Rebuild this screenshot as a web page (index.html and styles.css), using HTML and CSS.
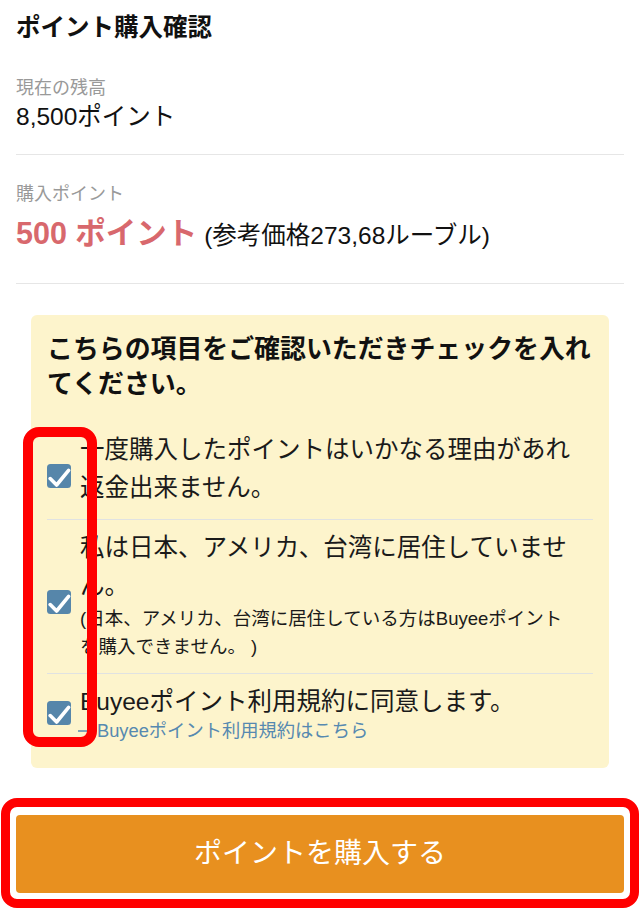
FILE: index.html
```html
<!DOCTYPE html>
<html lang="ja">
<head>
<meta charset="utf-8">
<title>ポイント購入確認</title>
<link rel="stylesheet" href="styles.css">
</head>
<body>
<div class="page">
  <h1 class="title">ポイント購入確認</h1>

  <section class="summary summary-first">
    <div class="label">現在の残高</div>
    <div class="balance">8,500ポイント</div>
  </section>

  <section class="summary summary-second">
    <div class="label">購入ポイント</div>
    <div class="amount"><span class="points">500 ポイント</span> <span class="ref">(参考価格273,68ルーブル)</span></div>
  </section>

  <div class="confirm-box">
    <h2 class="confirm-heading">こちらの項目をご確認いただきチェックを入れてください。</h2>

    <label class="item">
      <svg class="cb" viewBox="0 0 24 24" aria-hidden="true"><rect width="24" height="24" rx="3.5" fill="#5686aa"/><path d="M3.2 14.6 L9.6 21 L21.6 6.4" fill="none" stroke="#fff" stroke-width="3.6" stroke-linecap="round" stroke-linejoin="round"/></svg>
      <div class="item-text">
        <p class="main">一度購入したポイントはいかなる理由があれ返金出来ません。</p>
      </div>
    </label>

    <label class="item">
      <svg class="cb" viewBox="0 0 24 24" aria-hidden="true"><rect width="24" height="24" rx="3.5" fill="#5686aa"/><path d="M3.2 14.6 L9.6 21 L21.6 6.4" fill="none" stroke="#fff" stroke-width="3.6" stroke-linecap="round" stroke-linejoin="round"/></svg>
      <div class="item-text">
        <p class="main">私は日本、アメリカ、台湾に居住していません。</p>
        <p class="note">(日本、アメリカ、台湾に居住している方はBuyeeポイントを購入できません。 )</p>
      </div>
    </label>

    <label class="item item-last">
      <svg class="cb cb-center" viewBox="0 0 24 24" aria-hidden="true"><rect width="24" height="24" rx="3.5" fill="#5686aa"/><path d="M3.2 14.6 L9.6 21 L21.6 6.4" fill="none" stroke="#fff" stroke-width="3.6" stroke-linecap="round" stroke-linejoin="round"/></svg>
      <div class="item-text">
        <p class="main">Buyeeポイント利用規約に同意します。</p>
        <a class="terms" href="#"><svg class="arrow" viewBox="0 0 18 10" aria-hidden="true"><path d="M0 5 H17 M13 1 L17 5 L13 9" fill="none" stroke="#5689b0" stroke-width="1.6"/></svg>Buyeeポイント利用規約はこちら</a>
      </div>
    </label>
  </div>

  <button class="buy" type="button">ポイントを購入する</button>
</div>

<div class="mark mark-checks"></div>
<div class="mark mark-button"></div>
</body>
</html>
```

FILE: styles.css
```css
* { box-sizing: border-box; }

html, body {
  margin: 0;
  padding: 0;
  background: #ffffff;
}

body {
  font-family: "Liberation Sans", "Noto Sans CJK JP", sans-serif;
  color: #1a1a1a;
  position: relative;
  width: 640px;
  height: 910px;
  overflow: hidden;
}

.page {
  padding: 10px 16px 0;
}

.title {
  margin: 0;
  font-size: 24.5px;
  line-height: 36px;
  font-weight: bold;
  color: #111;
}

.summary {
  border-bottom: 1px solid #e6e6e6;
}

.summary-first {
  padding: 30px 0 20px;
}

.summary-second {
  padding: 27px 0 23px;
}

.label {
  font-size: 18px;
  line-height: 24px;
  color: #999999;
}

.balance {
  font-size: 24.5px;
  line-height: 34px;
  color: #111;
}

.amount {
  height: 54px;
  padding-top: 3px;
  line-height: 54px;
  font-size: 24.5px;
  color: #111;
}

.points,
.ref {
  line-height: 1;
}

.points {
  font-size: 30.5px;
  font-weight: bold;
  color: #d8686d;
}

.confirm-box {
  margin: 31px 15px 0;
  background: #fdf4cc;
  border-radius: 6px;
  padding: 17px 16px 15px;
}

.confirm-heading {
  margin: 0 0 20px;
  font-size: 25.9px;
  line-height: 35px;
  font-weight: bold;
  color: #111;
}

.item {
  display: flex;
  align-items: center;
  gap: 9px;
  padding: 9px 0 12px;
  border-bottom: 1px solid #e0e2e2;
}

.item-last {
  border-bottom: none;
}

.cb {
  flex: none;
  width: 24px;
  height: 24px;
  margin-top: 13px;
}

.cb-center {
  margin-top: 2px;
}

.item-text {
  width: 496px;
}

.main {
  margin: 0;
  font-size: 24.5px;
  line-height: 38px;
  color: #1a1a1a;
}

.note {
  margin: 0;
  font-size: 18.5px;
  line-height: 28px;
  color: #1a1a1a;
}

.terms {
  display: flex;
  align-items: center;
  gap: 1px;
  margin-left: -2px;
  font-size: 18.3px;
  line-height: 20px;
  color: #5689b0;
  text-decoration: none;
}

.arrow {
  width: 18px;
  height: 10px;
  flex: none;
}

.buy {
  display: block;
  width: 100%;
  height: 78px;
  margin-top: 47px;
  border: none;
  border-radius: 4px;
  background: #e8901f;
  color: #ffffff;
  font-family: inherit;
  font-size: 28px;
  line-height: 78px;
  padding: 0;
}

.mark {
  position: absolute;
  border: 10px solid #ff0000;
  border-radius: 16px;
  pointer-events: none;
}

.mark-checks {
  left: 23px;
  top: 427px;
  width: 74px;
  height: 320px;
}

.mark-button {
  left: 1px;
  top: 798px;
  width: 638px;
  height: 110px;
  border-width: 9.5px;
}
```
